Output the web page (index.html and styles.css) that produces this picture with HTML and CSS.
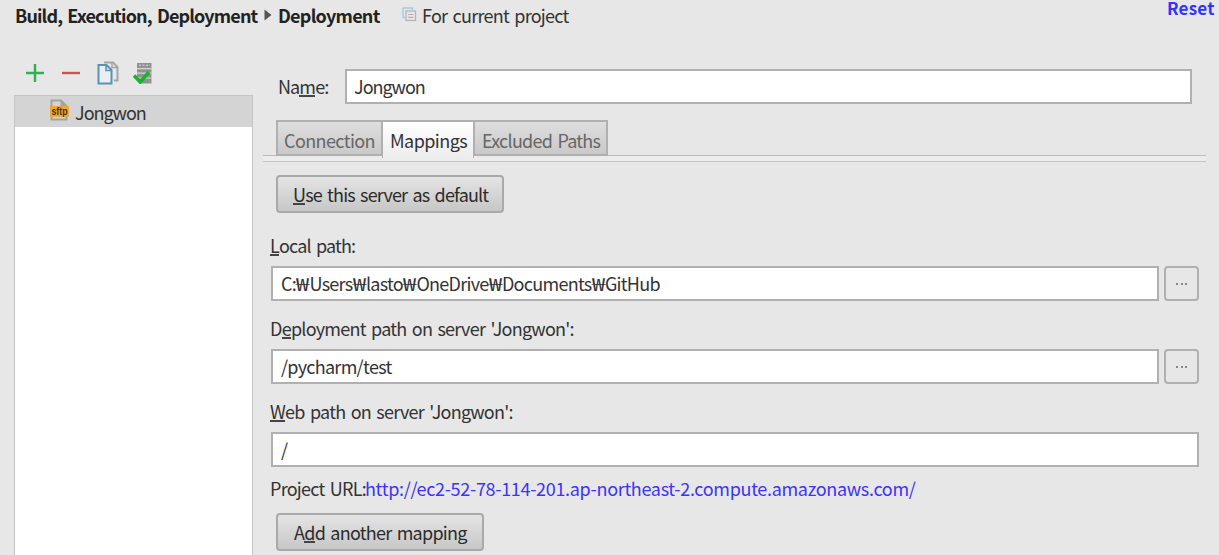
FILE: index.html
```html
<!DOCTYPE html>
<html lang="en">
<head>
<meta charset="utf-8">
<title>Deployment</title>
<link rel="stylesheet" href="styles.css">
</head>
<body>
<header class="header">
  <div class="crumbs">
    <span class="crumb crumb-parent">Build, Execution, Deployment</span>
    <svg class="arrow" width="8" height="12" viewBox="0 0 8 12"><path d="M0.5 0.5 7.5 6 0.5 11.5Z" fill="#555"/></svg>
    <span class="crumb crumb-current">Deployment</span>
    <svg class="scope-icon" width="15" height="15" viewBox="0 0 15 15" fill="none"><path d="M3 10.500H1V1H10.500V3" stroke="#a5cadd" stroke-width="1.300"/><rect x="4" y="4" width="9.500" height="9.500" stroke="#b5b5b5" stroke-width="1.300"/><path d="M6.200 7.500H11.300M6.200 10.300H11.300" stroke="#b0b0b0" stroke-width="1.200"/></svg>
    <span class="scope">For current project</span>
  </div>
  <a class="reset">Reset</a>
</header>
<main class="body">
  <aside class="sidebar">
    <div class="toolbar">
      <svg width="20" height="20" viewBox="0 0 20 20"><path d="M1 10H19M10 1V19" stroke="#36ac55" stroke-width="2.400"/></svg>
      <svg width="20" height="20" viewBox="0 0 20 20"><path d="M1 10H19" stroke="#c75450" stroke-width="2.400"/></svg>
      <svg width="22" height="24" viewBox="0 0 22 24" fill="none"><path d="M7 1.500H16L20.500 6V19.500H17" stroke="#a5a5a5" stroke-width="2"/><path d="M15 1.500V6.500H20" stroke="#a5a5a5" stroke-width="1.500"/><path d="M1.500 4H9.500L14.500 9V22.500H1.500Z" fill="#e9eef1" stroke="#5b91b3" stroke-width="2"/><path d="M9 4V9.500H14.500" stroke="#5b91b3" stroke-width="1.600"/></svg>
      <svg width="20" height="22" viewBox="0 0 20 22" fill="none"><path d="M4 1H18.500V21.500H4Z" fill="#929292"/><path d="M4 6.700H18.500M4 11.200H18.500M4 16H18.500" stroke="#d8d8d8" stroke-width="1.200"/><path d="M6 3.200H17" stroke="#dedede" stroke-width="1" stroke-dasharray="2 1.500"/><path d="M3 14.500 7 19.500V22H3Z" fill="#e7e7e7"/><path d="M1 13.500 7.200 20 16 10" stroke="#17b52e" stroke-width="3.500"/></svg>
    </div>
    <div class="tree">
      <div class="tree-row">
        <svg class="sftp-icon" width="20" height="22" viewBox="0 0 20 22"><path d="M1.500 8V1.500H11L16.500 7V8M1.500 16V20.500H16.500V16" fill="none" stroke="#a3a3a3" stroke-width="2"/><path d="M10.500 1V7H16.500" fill="#a3a3a3"/><rect x="0" y="7" width="19" height="11" fill="#eea63c"/><text class="sftp-text" x="1.500" y="15.700" textLength="16" lengthAdjust="spacingAndGlyphs">sftp</text></svg>
        <span class="server">Jongwon</span>
      </div>
    </div>
  </aside>
  <section class="content">
    <div class="name-row"><label class="name-label">Na<u>m</u>e:</label><div class="field name-field"><span class="server">Jongwon</span></div></div>
    <nav class="tabs">
      <div class="tab tab-connection"><span>Connection</span></div>
      <div class="tab tab-active"><span>Mappings</span></div>
      <div class="tab tab-excluded"><span>Excluded Paths</span></div>
    </nav>
    <div class="tab-strip"></div>
    <div class="panel">
      <button class="button default-button"><span><u>U</u>se this server as default</span></button>
      <label class="label local-label"><u>L</u>ocal path:</label>
      <div class="path-row"><div class="field"><span class="local-value">C:<span class="won">₩</span>Users<span class="won">₩</span>lasto<span class="won">₩</span>OneDrive<span class="won">₩</span>Documents<span class="won">₩</span>GitHub</span></div><button class="browse"><i></i><i></i><i></i></button></div>
      <label class="label deploy-label">D<u>e</u>ployment path on server 'Jongwon':</label>
      <div class="path-row"><div class="field"><span class="deploy-value">/pycharm/test</span></div><button class="browse"><i></i><i></i><i></i></button></div>
      <label class="label web-label"><u>W</u>eb path on server 'Jongwon':</label>
      <div class="path-row"><div class="field"><span>/</span></div></div>
      <div class="url-row"><span class="url-label">Project URL:</span><a class="url">http://ec2-52-78-114-201.ap-northeast-2.compute.amazonaws.com/</a></div>
      <button class="button add-button"><span>A<u>d</u>d another mapping</span></button>
    </div>
  </section>
</main>
</body>
</html>
```
FILE: styles.css
```css
* { box-sizing: border-box; }
body { margin: 0; width: 1219px; height: 555px; overflow: hidden; background: #e7e7e7; color: #333; font: 18px/24px "Noto Sans CJK KR", "Noto Sans", sans-serif; white-space: nowrap; letter-spacing: -0.75px; word-spacing: 2px; }
svg { display: block; flex: none; }
u { text-decoration: none; border-bottom: 2px solid #444; display: inline-block; line-height: 17px; }
.header { height: 62px; display: flex; justify-content: space-between; padding: 3px 4px 0 15px; }
.crumbs { display: flex; height: 24px; align-items: center; }
.crumb { font-weight: 700; color: #222; }
.crumb-parent { width: 243px; letter-spacing: -0.86px; }
.arrow { margin: 0 6px 1px; }
.crumb-current { width: 102px; }
.scope-icon { margin: 0 4px 1px 22px; }
.scope { margin-left: 1px; }
.reset { color: #3434ff; font-weight: 700; font-size: 17px; line-height: 16px; margin-top: -3px; width: 48px; height: 18px; letter-spacing: 0.2px; }
.body { display: flex; }
.sidebar { width: 239px; margin-left: 14px; }
.toolbar { height: 33px; display: flex; align-items: flex-start; gap: 16px; padding-left: 11px; }
.toolbar svg:nth-child(-n+2) { margin-top: 1px; }
.toolbar svg:nth-child(3) { margin-top: -1px; }
.toolbar svg:nth-child(4) { margin-left: -2px; }
.tree { height: 470px; border: 1px solid #c5c5c5; background: #fff; }
.tree-row { height: 31px; background: #d4d4d4; display: flex; align-items: center; padding: 1px 0 0 35px; gap: 5px; }
.sftp-icon { margin-bottom: 5px; }
.sftp-text { font: 700 10px "Liberation Sans", sans-serif; fill: #443514; letter-spacing: 0; }
.server { letter-spacing: -1px; }
.content { width: 943px; margin: 7px 0 0 10px; }
.name-row { display: flex; align-items: center; padding-left: 15px; height: 35px; }
.name-label { width: 67px; letter-spacing: -0.9px; padding-bottom: 2px; }
.field { height: 35px; background: #fff; border: 2px solid #b0b0b0; display: flex; align-items: center; padding: 0 0 2px 8px; flex: 1; }
.name-field { flex: none; width: 847px; padding-left: 7px; }
.tabs { display: flex; margin: 16px 0 0 13px; height: 36px; position: relative; z-index: 1; letter-spacing: -0.6px; }
.tab { height: 36px; padding: 6px 0 0 7px; border: 2px solid #b0b0b0; border-left-width: 1px; border-right-width: 1px; color: #666; background: linear-gradient(#dedede, #c9c9c9); }
.tab-connection { width: 106px; border-left-width: 2px; padding-left: 6px; }
.tab-active { width: 92px; height: 38px; background: linear-gradient(#fff, #ededed); border-bottom: 0; color: #333; letter-spacing: -0.55px; }
.tab-excluded { width: 134px; border-right-width: 2px; letter-spacing: -0.75px; }
.tab-strip { height: 7px; margin-top: -1px; border-top: 1px solid #bcbcbc; border-bottom: 1px solid #c4c4c4; background: #ececec; }
.panel { padding: 13px 7px 0 8px; display: flex; flex-direction: column; }
.button { display: flex; justify-content: flex-start; align-items: center; height: 38px; border: 2px solid #a9a9a9; border-radius: 4px; background: linear-gradient(#e4e4e4, #c7c7c7); font: inherit; letter-spacing: inherit; word-spacing: inherit; color: #2b2b2b; margin-left: 5px; padding: 0 0 0 15px; }
.default-button { width: 228px; margin-bottom: 20px; letter-spacing: -0.83px; }
.label { height: 24px; margin-bottom: 9px; margin-left: -1px; }
.local-label { letter-spacing: -0.83px; }
.local-value { letter-spacing: -0.72px; }
.won { display: inline-block; width: 13.400px; padding-left: 1.500px; transform: scaleX(1.35); }
.deploy-value { letter-spacing: -0.72px; }
.path-row { display: flex; gap: 5px; margin-bottom: 15px; }
.browse { width: 35px; height: 35px; border: 2px solid #b0b0b0; border-radius: 4px; background: #e7e7e7; display: flex; align-items: center; justify-content: center; gap: 2.500px; padding: 0; }
.browse i { width: 2px; height: 2px; background: #888; }
.url-row { display: flex; margin-top: -6px; }
.url-label { width: 95px; margin-left: -1px; }
.url { color: #3c34f4; letter-spacing: -0.32px; }
.add-button { width: 208px; margin-top: 13px; padding-left: 16px; }
```
